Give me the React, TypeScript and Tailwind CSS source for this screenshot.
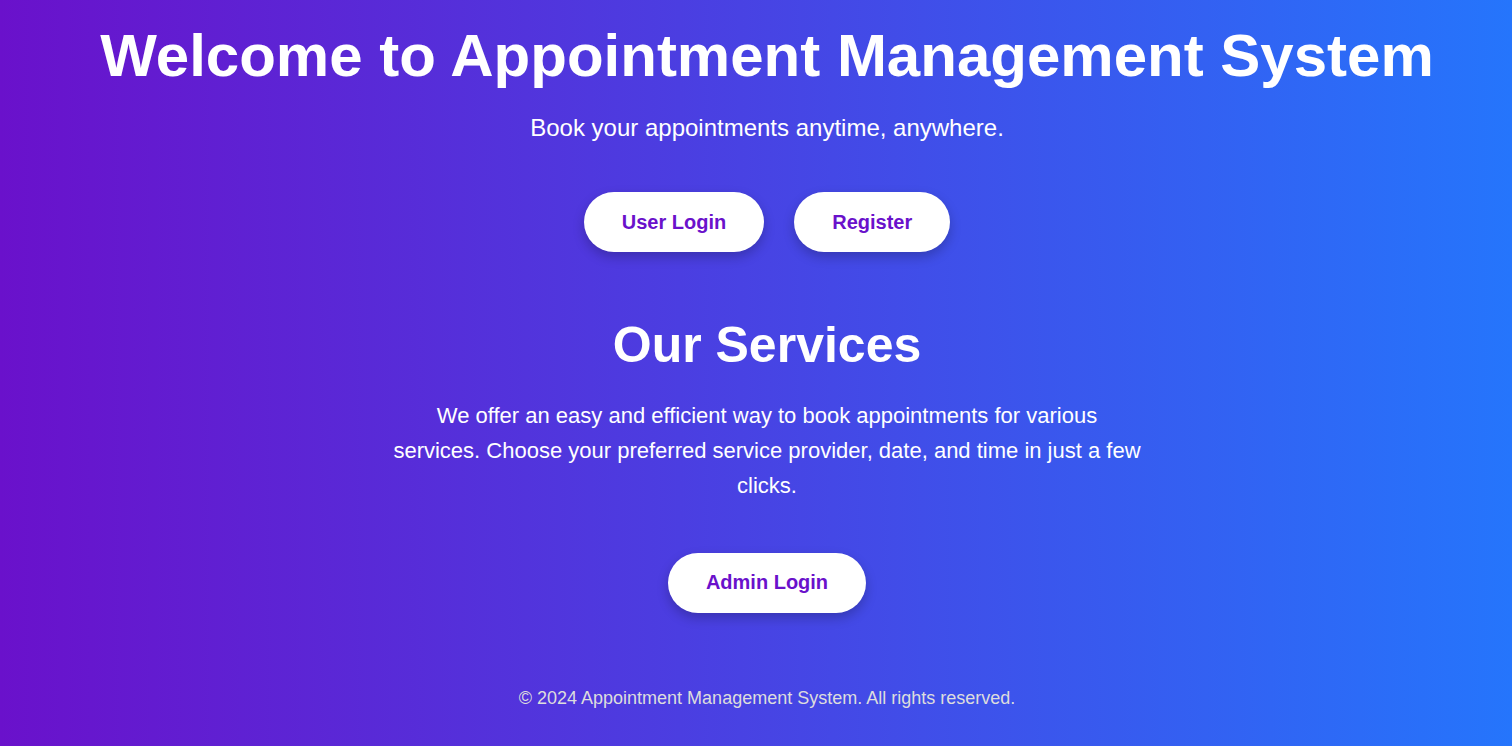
import React from "react";

const btn =
  "bg-white text-[#6a11cb] font-bold text-[20px] leading-[23px] px-[38px] h-[60px] rounded-full shadow-[0_5px_12px_rgba(0,0,0,0.22)] flex items-center justify-center";

export default function App() {
  return (
    <div className="min-h-[746px] w-full bg-[linear-gradient(to_right,#6a11cb,#2575fc)] font-['Liberation_Sans',Arial,sans-serif] text-white pl-[22px] flex flex-col items-center text-center">
      <h1 className="mt-[21px] text-[60px] font-bold leading-[69px]">
        Welcome to Appointment Management System
      </h1>
      <p className="mt-[24px] text-[24px] leading-[28px]">
        Book your appointments anytime, anywhere.
      </p>
      <div className="mt-[50px] flex gap-[30px]">
        <button className={btn}>User Login</button>
        <button className={btn}>Register</button>
      </div>
      <h2 className="mt-[65px] text-[50px] font-bold leading-[57px]">Our Services</h2>
      <p className="mt-[24px] max-w-[750px] text-[22px] leading-[35.2px]">
        We offer an easy and efficient way to book appointments for various services. Choose
        your preferred service provider, date, and time in just a few clicks.
      </p>
      <div className="mt-[49px]">
        <button className={btn}>Admin Login</button>
      </div>
      <footer className="mt-[75px] text-[18px] leading-[21px] text-[#dddddd]">
        © 2024 Appointment Management System. All rights reserved.
      </footer>
    </div>
  );
}
